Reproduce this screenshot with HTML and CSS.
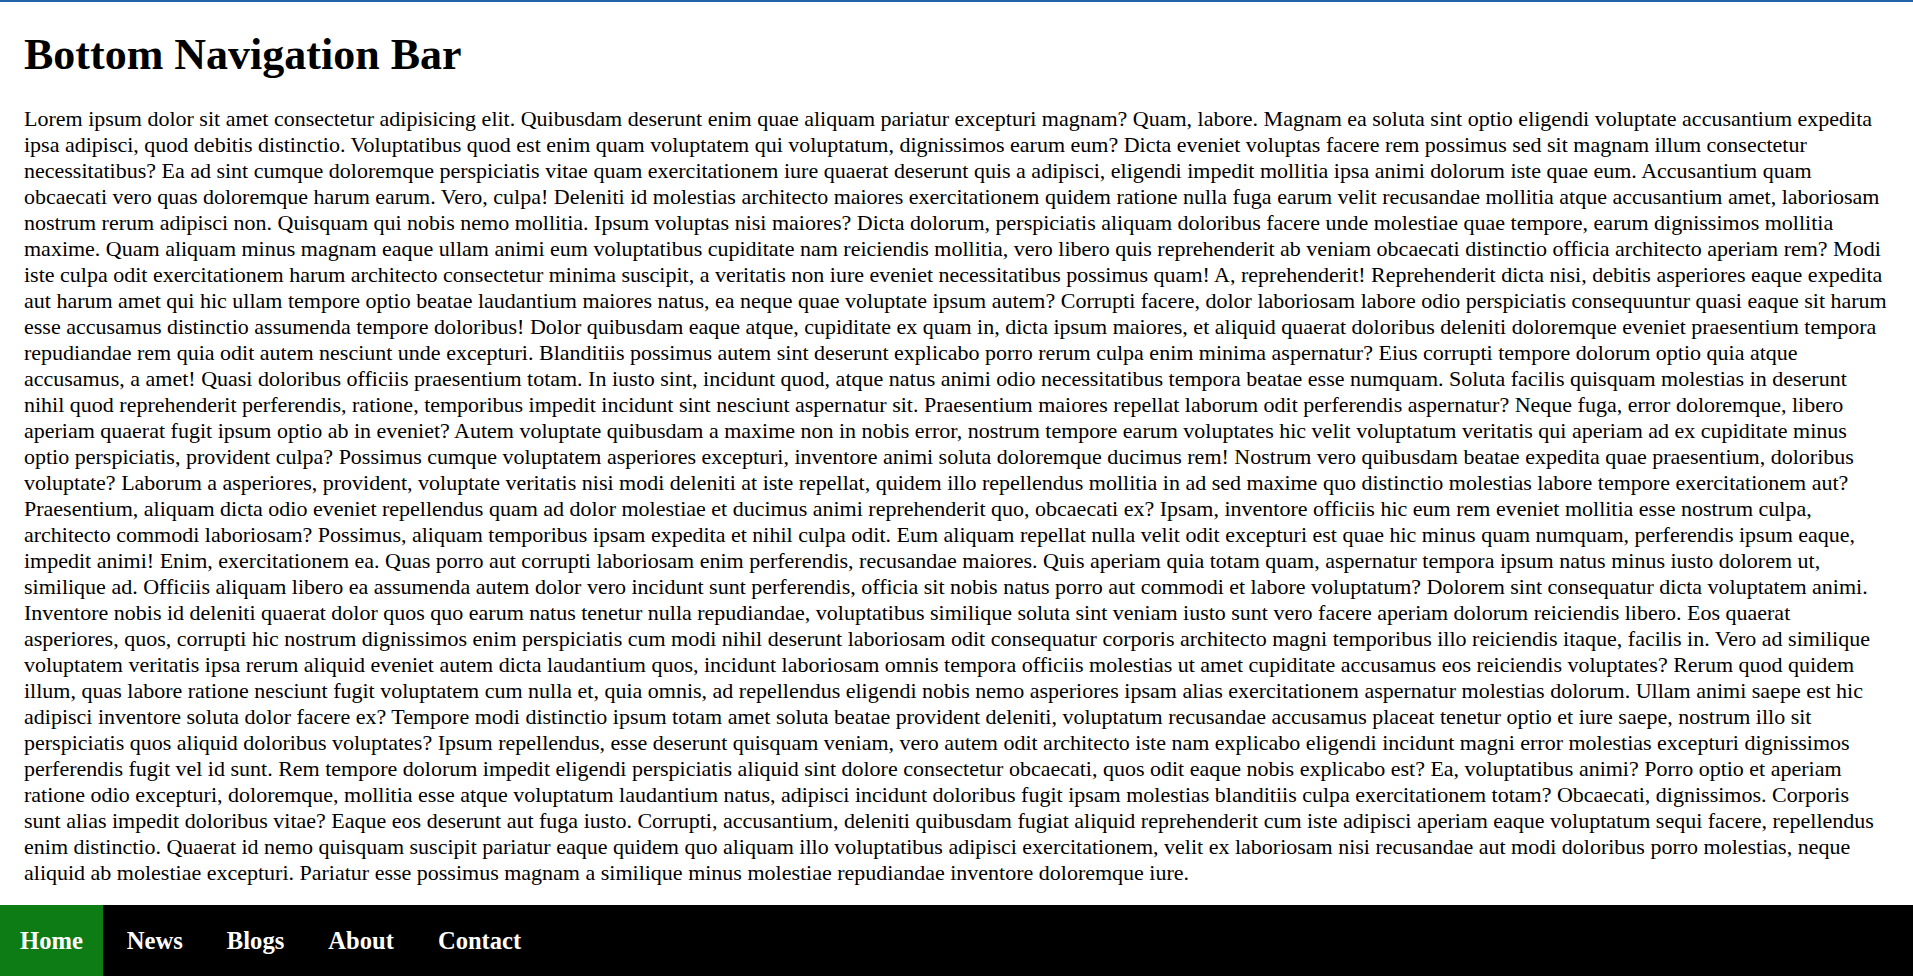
FILE: index.html
```html
<!DOCTYPE html>
<html lang="en">
<head>
<meta charset="utf-8">
<title>Bottom Navigation Bar</title>
<link rel="stylesheet" href="styles.css">
</head>
<body class="page">
<h1 class="title">Bottom Navigation Bar</h1>
<p class="text">Lorem ipsum dolor sit amet consectetur adipisicing elit. Quibusdam deserunt enim quae aliquam pariatur excepturi magnam? Quam, labore. Magnam ea soluta sint optio eligendi voluptate accusantium expedita ipsa adipisci, quod debitis distinctio. Voluptatibus quod est enim quam voluptatem qui voluptatum, dignissimos earum eum? Dicta eveniet voluptas facere rem possimus sed sit magnam illum consectetur necessitatibus? Ea ad sint cumque doloremque perspiciatis vitae quam exercitationem iure quaerat deserunt quis a adipisci, eligendi impedit mollitia ipsa animi dolorum iste quae eum. Accusantium quam obcaecati vero quas doloremque harum earum. Vero, culpa! Deleniti id molestias architecto maiores exercitationem quidem ratione nulla fuga earum velit recusandae mollitia atque accusantium amet, laboriosam nostrum rerum adipisci non. Quisquam qui nobis nemo mollitia. Ipsum voluptas nisi maiores? Dicta dolorum, perspiciatis aliquam doloribus facere unde molestiae quae tempore, earum dignissimos mollitia maxime. Quam aliquam minus magnam eaque ullam animi eum voluptatibus cupiditate nam reiciendis mollitia, vero libero quis reprehenderit ab veniam obcaecati distinctio officia architecto aperiam rem? Modi iste culpa odit exercitationem harum architecto consectetur minima suscipit, a veritatis non iure eveniet necessitatibus possimus quam! A, reprehenderit! Reprehenderit dicta nisi, debitis asperiores eaque expedita aut harum amet qui hic ullam tempore optio beatae laudantium maiores natus, ea neque quae voluptate ipsum autem? Corrupti facere, dolor laboriosam labore odio perspiciatis consequuntur quasi eaque sit harum esse accusamus distinctio assumenda tempore doloribus! Dolor quibusdam eaque atque, cupiditate ex quam in, dicta ipsum maiores, et aliquid quaerat doloribus deleniti doloremque eveniet praesentium tempora repudiandae rem quia odit autem nesciunt unde excepturi. Blanditiis possimus autem sint deserunt explicabo porro rerum culpa enim minima aspernatur? Eius corrupti tempore dolorum optio quia atque accusamus, a amet! Quasi doloribus officiis praesentium totam. In iusto sint, incidunt quod, atque natus animi odio necessitatibus tempora beatae esse numquam. Soluta facilis quisquam molestias in deserunt nihil quod reprehenderit perferendis, ratione, temporibus impedit incidunt sint nesciunt aspernatur sit. Praesentium maiores repellat laborum odit perferendis aspernatur? Neque fuga, error doloremque, libero aperiam quaerat fugit ipsum optio ab in eveniet? Autem voluptate quibusdam a maxime non in nobis error, nostrum tempore earum voluptates hic velit voluptatum veritatis qui aperiam ad ex cupiditate minus optio perspiciatis, provident culpa? Possimus cumque voluptatem asperiores excepturi, inventore animi soluta doloremque ducimus rem! Nostrum vero quibusdam beatae expedita quae praesentium, doloribus voluptate? Laborum a asperiores, provident, voluptate veritatis nisi modi deleniti at iste repellat, quidem illo repellendus mollitia in ad sed maxime quo distinctio molestias labore tempore exercitationem aut? Praesentium, aliquam dicta odio eveniet repellendus quam ad dolor molestiae et ducimus animi reprehenderit quo, obcaecati ex? Ipsam, inventore officiis hic eum rem eveniet mollitia esse nostrum culpa, architecto commodi laboriosam? Possimus, aliquam temporibus ipsam expedita et nihil culpa odit. Eum aliquam repellat nulla velit odit excepturi est quae hic minus quam numquam, perferendis ipsum eaque, impedit animi! Enim, exercitationem ea. Quas porro aut corrupti laboriosam enim perferendis, recusandae maiores. Quis aperiam quia totam quam, aspernatur tempora ipsum natus minus iusto dolorem ut, similique ad. Officiis aliquam libero ea assumenda autem dolor vero incidunt sunt perferendis, officia sit nobis natus porro aut commodi et labore voluptatum? Dolorem sint consequatur dicta voluptatem animi. Inventore nobis id deleniti quaerat dolor quos quo earum natus tenetur nulla repudiandae, voluptatibus similique soluta sint veniam iusto sunt vero facere aperiam dolorum reiciendis libero. Eos quaerat asperiores, quos, corrupti hic nostrum dignissimos enim perspiciatis cum modi nihil deserunt laboriosam odit consequatur corporis architecto magni temporibus illo reiciendis itaque, facilis in. Vero ad similique voluptatem veritatis ipsa rerum aliquid eveniet autem dicta laudantium quos, incidunt laboriosam omnis tempora officiis molestias ut amet cupiditate accusamus eos reiciendis voluptates? Rerum quod quidem illum, quas labore ratione nesciunt fugit voluptatem cum nulla et, quia omnis, ad repellendus eligendi nobis nemo asperiores ipsam alias exercitationem aspernatur molestias dolorum. Ullam animi saepe est hic adipisci inventore soluta dolor facere ex? Tempore modi distinctio ipsum totam amet soluta beatae provident deleniti, voluptatum recusandae accusamus placeat tenetur optio et iure saepe, nostrum illo sit perspiciatis quos aliquid doloribus voluptates? Ipsum repellendus, esse deserunt quisquam veniam, vero autem odit architecto iste nam explicabo eligendi incidunt magni error molestias excepturi dignissimos perferendis fugit vel id sunt. Rem tempore dolorum impedit eligendi perspiciatis aliquid sint dolore consectetur obcaecati, quos odit eaque nobis explicabo est? Ea, voluptatibus animi? Porro optio et aperiam ratione odio excepturi, doloremque, mollitia esse atque voluptatum laudantium natus, adipisci incidunt doloribus fugit ipsam molestias blanditiis culpa exercitationem totam? Obcaecati, dignissimos. Corporis sunt alias impedit doloribus vitae? Eaque eos deserunt aut fuga iusto. Corrupti, accusantium, deleniti quibusdam fugiat aliquid reprehenderit cum iste adipisci aperiam eaque voluptatum sequi facere, repellendus enim distinctio. Quaerat id nemo quisquam suscipit pariatur eaque quidem quo aliquam illo voluptatibus adipisci exercitationem, velit ex laboriosam nisi recusandae aut modi doloribus porro molestias, neque aliquid ab molestiae excepturi. Pariatur esse possimus magnam a similique minus molestiae repudiandae inventore doloremque iure.</p>
<nav class="bottom-nav">
<a class="nav-link active" href="#">Home</a>
<a class="nav-link" href="#">News</a>
<a class="nav-link" href="#">Blogs</a>
<a class="nav-link" href="#">About</a>
<a class="nav-link" href="#">Contact</a>
</nav>
</body>
</html>
```
FILE: styles.css
```css
.page {
  margin: 0;
  padding: 0 24px 72px;
  border-top: 2px solid #2262a8;
  font-family: "Liberation Serif", "Times New Roman", serif;
  font-size: 22px;
  color: #000;
  background: #fff;
}

.title {
  font-size: 44px;
  font-weight: bold;
  line-height: normal;
  margin: 27px 0 26px;
}

.text {
  margin: 0;
  line-height: 26px;
}

.bottom-nav {
  position: fixed;
  left: 0;
  right: 0;
  bottom: 0;
  height: 71px;
  display: flex;
  gap: 4px;
  background: #000;
}

.nav-link {
  display: flex;
  align-items: center;
  padding: 0 20px;
  color: #fff;
  text-decoration: none;
  font-weight: bold;
  font-size: 24.6px;
}

.nav-link.active {
  background: #0e7c14;
}
```
